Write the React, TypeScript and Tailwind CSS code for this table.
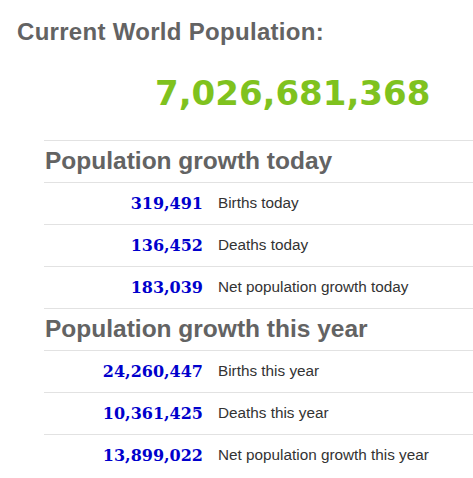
const today = [
  { value: "319,491", label: "Births today" },
  { value: "136,452", label: "Deaths today" },
  { value: "183,039", label: "Net population growth today" },
];

const thisYear = [
  { value: "24,260,447", label: "Births this year" },
  { value: "10,361,425", label: "Deaths this year" },
  { value: "13,899,022", label: "Net population growth this year" },
];

function Section({ title, rows }: { title: string; rows: { value: string; label: string }[] }) {
  return (
    <>
      <div className="h-[42px] border-t border-[#e2e2e2] flex items-center">
        <h2 className="text-[24.5px] leading-none font-bold text-[#636363] pl-px">{title}</h2>
      </div>
      {rows.map((r) => (
        <div key={r.label} className="h-[42px] border-t border-[#e2e2e2] flex items-center">
          <span className="w-[159px] text-right font-['DejaVu_Serif',serif] font-bold text-[16px] text-[#0000cc]">
            {r.value}
          </span>
          <span className="ml-[15px] text-[15.3px] text-[#333]">{r.label}</span>
        </div>
      ))}
    </>
  );
}

export default function App() {
  return (
    <div className="w-[473px] h-[478px] bg-white overflow-hidden font-['Liberation_Sans',Arial,sans-serif]">
      <h1 className="pt-[19px] pl-[17px] text-[24px] leading-[26px] font-bold text-[#636363] tracking-[0.3px]">
        Current World Population:
      </h1>
      <div className="mt-[28px] pl-[155px] h-[40px] leading-[40px] font-['DejaVu_Sans',sans-serif] font-bold text-[34px] text-[#7fc21e]">
        7,026,681,368
      </div>
      <div className="mt-[27px] ml-[44px]">
        <Section title="Population growth today" rows={today} />
        <Section title="Population growth this year" rows={thisYear} />
      </div>
    </div>
  );
}
